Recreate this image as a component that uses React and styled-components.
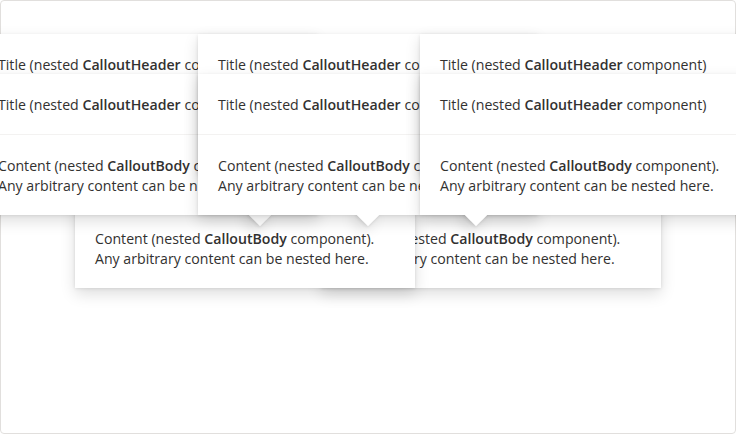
import React from 'react'
import styled, { createGlobalStyle } from 'styled-components'

const GlobalStyle = createGlobalStyle`
html, body {
    margin: 0;
    padding: 0;
    overflow: hidden;
    background: #ffffff;
}
body {
    font-family: "Open Sans", "Noto Sans", sans-serif;
    color: #323130;
}
`

// where the callouts sit around the (hidden) target
const callouts = [
    { id: 'bottom-end', left: 321, top: 147 },
    { id: 'bottom-start', left: 75, top: 147 },
    { id: 'left-top', left: -22, top: 34 },
    { id: 'top-end', left: -22, top: 74, beak: 282 },
    { id: 'right-top', left: 198, top: 34 },
    { id: 'top', left: 198, top: 74, beak: 170 },
    { id: 'left-bottom', left: 420, top: 34 },
    { id: 'top-start', left: 420, top: 74, beak: 56 },
]

function Callout(props) {

    return (
        <CalloutRoot $left={props.left} $top={props.top}>
            {props.beak !== undefined && <Beak $offset={props.beak} />}
            <CalloutMain>
                <CalloutHeader>
                    Title (nested <b>CalloutHeader</b> component)
                </CalloutHeader>
                <CalloutBody>
                    Content (nested <b>CalloutBody</b> component).<br />
                    Any arbitrary content can be nested here.
                </CalloutBody>
            </CalloutMain>
        </CalloutRoot>
    )
}

function App() {

    return (
        <>
            <GlobalStyle />
            <Frame>
                {callouts.map((c) => (
                    <Callout key={c.id} left={c.left} top={c.top} beak={c.beak} />
                ))}
            </Frame>
        </>
    )
}

export default App


const Frame = styled.div`
position: relative;
box-sizing: border-box;
width: 736px;
height: 434px;
border: 1px solid #e1dfdd;
border-radius: 4px;
background: #ffffff;
`

const CalloutRoot = styled.div`
position: absolute;
left: ${(p) => p.$left - 1}px;
top: ${(p) => p.$top - 1}px;
width: 340px;
background: #ffffff;
box-shadow: 0 6.4px 14.4px 0 rgba(0, 0, 0, 0.132), 0 1.2px 3.6px 0 rgba(0, 0, 0, 0.108);
`

const Beak = styled.div`
position: absolute;
left: ${(p) => p.$offset - 8}px;
bottom: -8px;
width: 16px;
height: 16px;
background: #ffffff;
transform: rotate(45deg);
box-shadow: 0 6.4px 14.4px 0 rgba(0, 0, 0, 0.132), 0 1.2px 3.6px 0 rgba(0, 0, 0, 0.108);
`

const CalloutMain = styled.div`
position: relative;
background: #ffffff;
font-size: 14.15px;
line-height: 20px;

b {
    font-weight: 600;
}
`

const CalloutHeader = styled.div`
padding: 21px 20px 19px;
white-space: nowrap;
border-bottom: 1px solid #f3f2f1;
`

const CalloutBody = styled.div`
padding: 21px 20px 19px;
white-space: nowrap;
`
